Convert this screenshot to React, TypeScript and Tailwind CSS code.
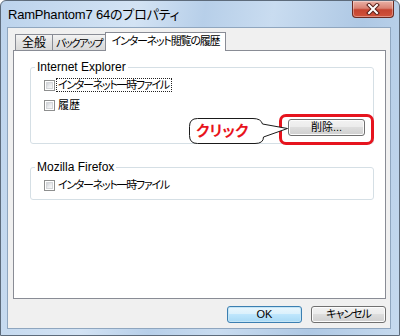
function Check() {
  return (
    <span className="flex h-[11px] w-[11px] shrink-0 border border-[#8e8f8f] bg-white p-[1px]">
      <span className="flex-1 border border-[#d4d6d9] bg-[linear-gradient(135deg,#cfd2d7,#eeeff1_60%,#f8f8f8)]" />
    </span>
  );
}

function WinButton({ label, focused }: { label: string; focused?: boolean }) {
  return (
    <div
      className={
        focused
          ? "flex h-[17px] w-[75px] items-center justify-center rounded-[3px] border border-[#3c7fb1] bg-[linear-gradient(to_bottom,#eaf6fd_0%,#d9f0fc_50%,#bee6fd_50%,#a7d9f5_100%)] text-[11px] leading-none text-black shadow-[inset_0_0_0_1px_#c4e5f6]"
          : "flex h-[17px] w-[75px] items-center justify-center rounded-[3px] border border-[#707070] bg-[linear-gradient(to_bottom,#f2f2f2_0%,#ebebeb_50%,#dddddd_50%,#cfcfcf_100%)] text-[11px] leading-none tracking-[-1px] text-black shadow-[inset_0_0_0_1px_#fcfcfc]"
      }
    >
      {label}
    </div>
  );
}

export default function App() {
  return (
    <div className="relative flex h-[336px] w-[400px] flex-col overflow-hidden rounded-t-[6px] border border-[#5d6b7b] bg-[linear-gradient(100deg,#bcd3ec_0%,#d3e3f4_30%,#b7cfe9_45%,#c9dcf0_60%,#aec8e4_80%,#c6daef_100%)] [font-family:'Liberation_Sans','Noto_Sans_CJK_JP',sans-serif] text-[12px] leading-[14px] text-black [font-feature-settings:'palt']">
      {/* title bar */}
      <div className="flex h-[26px] shrink-0 items-start justify-between">
        <div className="pl-[7px] pt-[6px] text-[13px] leading-[15px] tracking-[-0.2px] text-black">RamPhantom7 64のプロパティ</div>
        <div className="mr-[5px] flex h-[17px] w-[42px] items-center justify-center rounded-b-[4px] border border-t-0 border-[#6b2a22] bg-[linear-gradient(to_bottom,#eab1a6_0%,#d98273_45%,#c54430_55%,#d0533c_100%)] shadow-[inset_0_0_0_1px_rgba(255,255,255,0.35)]">
          <svg width="14" height="12" viewBox="0 0 14 12">
            <path d="M3 2 L11 10 M11 2 L3 10" stroke="#5a1f18" strokeWidth="4" strokeLinecap="square" />
            <path d="M3 2 L11 10 M11 2 L3 10" stroke="#ffffff" strokeWidth="2" strokeLinecap="square" />
          </svg>
        </div>
      </div>

      {/* client area */}
      <div className="mb-[6px] ml-[6px] mr-[8px] flex flex-1 flex-col border border-[#8fa6bf] bg-[#f0f0f0] pl-[5px] pr-[4px]">
        {/* tabs */}
        <div className="mt-[4px] flex h-[18px] items-end whitespace-nowrap pl-[2px] text-[11px] tracking-[-1.2px]">
          <div className="flex h-[16px] w-[38px] items-center justify-center border border-b-0 border-[#898c95] bg-[linear-gradient(to_bottom,#f3f3f3,#e3e3e3_50%,#d9d9d9)] text-[12px] tracking-[0px]">全般</div>
          <div className="-ml-px flex h-[16px] w-[54px] items-center justify-center overflow-hidden border border-b-0 border-[#898c95] bg-[linear-gradient(to_bottom,#f3f3f3,#e3e3e3_50%,#d9d9d9)] text-[10.5px] tracking-[-1.6px]">バックアップ</div>
          <div className="relative z-10 -mb-px -ml-px flex h-[19px] w-[121px] items-center justify-center border border-b-0 border-[#898c95] bg-white pb-[2px]">インターネット閲覧の履歴</div>
        </div>

        {/* panel */}
        <div className="flex h-[249px] flex-col border border-[#898c95] bg-white pl-[16px] pr-[11px]">
          <fieldset className="mt-[9px] rounded-[3px] border border-[#d5dfe5] pb-[7px] pl-[13px] pr-[8px]">
            <legend className="-ml-[9px] px-[2px] leading-[14px]">Internet Explorer</legend>
            <div className="mt-[4px] flex h-[14px] items-center gap-[1px] text-[11px] tracking-[-1.3px]">
              <Check />
              <span className="border border-dotted border-[#222] pl-[1px] pr-[2px] leading-[12px]">インターネット一時ファイル</span>
            </div>
            <div className="mt-[6px] flex h-[14px] items-center gap-[2px] text-[11px]">
              <Check />
              <span className="px-[1px]">履歴</span>
            </div>
            <div className="mt-[7px] flex justify-end">
              <div className="flex h-[17px] w-[77px] items-center justify-center rounded-[3px] border border-[#707070] bg-[linear-gradient(to_bottom,#f2f2f2_0%,#ebebeb_50%,#dddddd_50%,#cfcfcf_100%)] text-[11px] leading-none shadow-[inset_0_0_0_1px_#fcfcfc]">削除...</div>
            </div>
          </fieldset>

          <fieldset className="mt-[16px] rounded-[3px] border border-[#d5dfe5] pb-[7px] pl-[13px] pr-[8px]">
            <legend className="-ml-[9px] px-[2px] leading-[14px]">Mozilla Firefox</legend>
            <div className="mt-[4px] flex h-[14px] items-center gap-[2px] text-[11px] tracking-[-1.3px]">
              <Check />
              <span className="px-[1px]">インターネット一時ファイル</span>
            </div>
          </fieldset>
        </div>

        {/* bottom buttons */}
        <div className="mt-[7px] flex justify-end gap-[9px]">
          <WinButton label="OK" focused />
          <WinButton label="キャンセル" />
        </div>
      </div>

      {/* annotation: red highlight */}
      <div className="absolute left-[278px] top-[113px] h-[31px] w-[95px] rounded-[7px] border-[3px] border-[#e6141e]" />

      {/* annotation: callout */}
      <div className="absolute left-[186px] top-[115px] h-[30px] w-[104px]">
        <svg className="absolute inset-0" width="104" height="30" viewBox="0 0 104 30">
          <path
            d="M10.5,2.5 H66 Q74,2.5 75.5,8 L100.5,12.5 L76.5,21 Q76.5,27.5 68,27.5 H10.5 Q2.5,27.5 2.5,19.5 V10.5 Q2.5,2.5 10.5,2.5 Z"
            fill="#ffffff"
            stroke="#1a1a1a"
            strokeWidth="1"
          />
        </svg>
        <div className="relative pl-[9px] pt-[6px] text-[15px] font-bold leading-[17px] text-[#e8141c]">クリック</div>
      </div>
    </div>
  );
}
